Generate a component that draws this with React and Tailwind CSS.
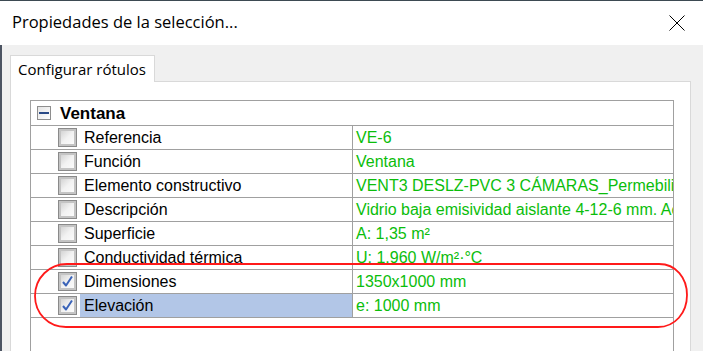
import React from 'react';

const rows = [
	{ label: 'Referencia', value: 'VE-6' },
	{ label: 'Función', value: 'Ventana' },
	{ label: 'Elemento constructivo', value: 'VENT3 DESLZ-PVC 3 CÁMARAS_Permebilidad clase 3' },
	{ label: 'Descripción', value: 'Vidrio baja emisividad aislante 4-12-6 mm. Acristalamiento' },
	{ label: 'Superficie', value: 'A: 1,35 m²' },
	{ label: 'Conductividad térmica', value: 'U: 1,960 W/m²·°C' },
	{ label: 'Dimensiones', value: '1350x1000 mm', checked: true },
	{ label: 'Elevación', value: 'e: 1000 mm', checked: true, selected: true },
];

const CheckBox = ({ checked }) => (
	<div className="w-[19px] h-[19px] shrink-0 border border-[#8a8a8a] bg-[#c4c4c4] p-[2px]">
		<div className="w-full h-full bg-gradient-to-br from-[#d4d4d4] via-[#f2f2f2] to-[#fbfbfb] flex items-center justify-center">
			{checked && (
				<svg width="13" height="13" viewBox="0 0 13 13">
					<path d="M2 7 L5 10.5 L11 1.5" fill="none" stroke="#3a63b8" strokeWidth="2" strokeLinejoin="round" />
				</svg>
			)}
		</div>
	</div>
);

export default function App() {
	return (
		<div className="relative w-[703px] h-[351px] overflow-hidden bg-white flex flex-col" style={{ fontFamily: '"Liberation Sans", Arial, sans-serif' }}>
			{/* title bar */}
			<div className="h-[45px] shrink-0 flex items-center justify-between pl-[12px] pr-[18px] border-t border-[#3d4a52]">
				<span className="text-[16.5px] text-black pb-[2px]" style={{ fontFamily: '"Open Sans", "Noto Sans", sans-serif' }}>Propiedades de la selección...</span>
				<svg width="16" height="16" viewBox="0 0 16 16" className="mb-[1px]">
					<path d="M0.5 0.5 L15.5 15.5 M15.5 0.5 L0.5 15.5" stroke="#000" strokeWidth="1" />
				</svg>
			</div>

			{/* body */}
			<div className="flex-1 bg-[#f0f0f0] border-l-2 border-[#4c5462] pl-[8px] pr-[12px] pt-[10px] flex flex-col">
				<div className="flex h-[27px] shrink-0">
					<div className="w-[145px] bg-white border-t border-l border-r border-[#d9d9d9] pl-[7px] pt-[2px] text-[15px] text-black" style={{ fontFamily: '"Open Sans", "Noto Sans", sans-serif' }}>
						Configurar rótulos
					</div>
					<div className="flex-1 border-b border-[#d9d9d9]" />
				</div>
				<div className="flex-1 bg-white border-l border-r border-[#d9d9d9] pl-[19px] pr-[16px] pt-[18px]">
					<div className="h-full border-l border-t border-r border-[#a0a0a0] text-[16px] text-black">
						<div className="h-[25px] border-b border-[#a0a0a0] flex items-center pl-[6px]">
							<div className="w-[14px] h-[14px] border border-[#8e8e8e] bg-gradient-to-br from-[#e4e4e4] to-white flex items-center justify-center">
								<div className="w-[10px] h-[2px] bg-[#2a4a86]" />
							</div>
							<span className="ml-[9px] font-bold text-[17px] leading-none">Ventana</span>
						</div>
						{rows.map((r) => (
							<div key={r.label} className="h-[24px] border-b border-[#a0a0a0] flex">
								<div className="w-[322px] shrink-0 border-r border-[#a0a0a0] flex items-center pl-[27px]">
									<CheckBox checked={r.checked} />
									<div className={`ml-[3px] h-full flex-1 flex items-center pl-[4px] ${r.selected ? 'bg-[#b2c6e7]' : ''}`}>
										{r.label}
									</div>
								</div>
								<div className="flex-1 min-w-0 overflow-hidden whitespace-nowrap flex items-center pl-[3px] text-[#0bbd0b]">
									{r.value}
								</div>
							</div>
						))}
					</div>
				</div>
			</div>

			{/* red annotation */}
			<svg className="absolute left-0 top-0 pointer-events-none" width="703" height="351">
				<path d="M67 264 L659 264 C676 264 687 278 687 295 C687 313 675 327 658 327 L66 327 C48 327 35 313 35 296 C35 278 49 264 67 264 Z" fill="none" stroke="#ff1a1a" strokeWidth="1.8" />
			</svg>
		</div>
	);
}
